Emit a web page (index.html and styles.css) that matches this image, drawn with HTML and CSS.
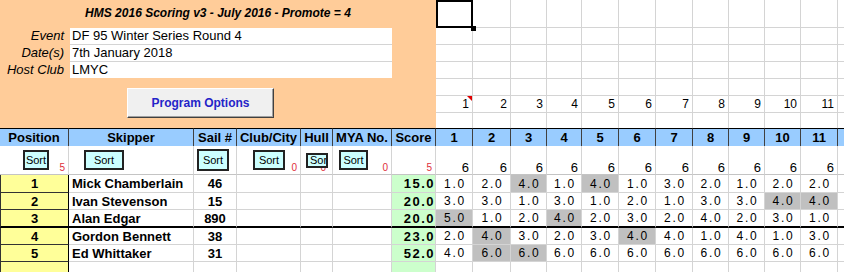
FILE: index.html
```html
<!DOCTYPE html>
<html lang="en">
<head>
    <meta charset="UTF-8">
    <title>HMS 2016 Scoring v3</title>
    <link rel="stylesheet" href="styles.css">
</head>
<body>
    <div class="sheet">
        <div class="panel">
            <div class="panel-title">HMS 2016 Scoring v3 - July 2016 - Promote = 4</div>
            <div class="event-info">
                <div class="info-label">Event</div>
                <div class="info-value">DF 95 Winter Series Round 4</div>
                <div class="info-label">Date(s)</div>
                <div class="info-value">7th January 2018</div>
                <div class="info-label">Host Club</div>
                <div class="info-value">LMYC</div>
            </div>
            <button class="options-button">Program Options</button>
        </div>
        <!-- the rest of the grid is filled in by the script below -->
        <div class="cells" id="cells"></div>
    </div>

    <script>
        const raceCount = 11;
        const cutAfter = 3; // heavy line drawn under this many boats

        // fixed columns left of the race results
        const columns = [
            { title: 'Position', sort: 'sort-position', count: 5 },
            { title: 'Skipper', sort: 'sort-skipper' },
            { title: 'Sail #', sort: 'sort-sail' },
            { title: 'Club/City', sort: 'sort-club', count: 0 },
            { title: 'Hull', sort: 'sort-hull', count: 0, countClass: 'count-hull' },
            { title: 'MYA No.', sort: 'sort-mya', count: 0 },
            { title: 'Score', count: 5 }
        ];

        // dropped = race indexes shown shaded
        const entries = [
            { name: 'Mick Chamberlain', sail: '46', score: 15, results: [1, 2, 4, 1, 4, 1, 3, 2, 1, 2, 2], dropped: [2, 4] },
            { name: 'Ivan Stevenson', sail: '15', score: 20, results: [3, 3, 1, 3, 1, 2, 1, 3, 3, 4, 4], dropped: [9, 10] },
            { name: 'Alan Edgar', sail: '890', score: 20, results: [5, 1, 2, 4, 2, 3, 2, 4, 2, 3, 1], dropped: [0, 3] },
            { name: 'Gordon Bennett', sail: '38', score: 23, results: [2, 4, 3, 2, 3, 4, 4, 1, 4, 1, 3], dropped: [1, 5] },
            { name: 'Ed Whittaker', sail: '31', score: 52, results: [4, 6, 6, 6, 6, 6, 6, 6, 6, 6, 6], dropped: [1, 2] }
        ];

        const cells = document.getElementById('cells');

        function addCell(className, text) {
            const cell = document.createElement('div');
            cell.className = 'cell ' + className;
            if (text !== undefined) cell.textContent = text;
            cells.appendChild(cell);
            return cell;
        }

        // blank cells right of the panel, race numbers in the 6th row
        for (let row = 0; row < 7; row++) {
            for (let col = 0; col <= raceCount; col++) {
                let className = 'blank';
                let text;
                if (row === 0 && col === 0) className += ' selected';
                if (row === 5 && col < raceCount) {
                    className += ' race-number';
                    text = col + 1;
                }
                if (row === 5 && col === 0) className += ' has-comment';
                if (row === 6) className += ' no-line';
                addCell(className, text);
            }
        }

        // header row
        columns.forEach(col => addCell('head', col.title));
        for (let i = 1; i <= raceCount; i++) addCell('head', i);
        addCell('head spare');

        // sort buttons and counters
        columns.forEach(col => {
            const cell = addCell('sort-cell');
            if (col.count !== undefined) {
                const count = document.createElement('span');
                count.className = 'sort-count' + (col.countClass ? ' ' + col.countClass : '');
                count.textContent = col.count;
                cell.appendChild(count);
            }
            if (col.sort) {
                const button = document.createElement('button');
                button.className = 'sort-button ' + col.sort;
                button.textContent = 'Sort';
                cell.appendChild(button);
            }
        });
        for (let i = 0; i < raceCount; i++) addCell('sort-cell race-total', 6);
        addCell('sort-cell');

        // results
        entries.forEach((entry, i) => {
            const line = i === cutAfter - 1 ? ' cut' : '';
            addCell('data position' + line, i + 1);
            addCell('data skipper' + line, entry.name);
            addCell('data sail' + line, entry.sail);
            addCell('data' + line);
            addCell('data' + line);
            addCell('data' + line);
            addCell('data score' + line, entry.score.toFixed(1));
            entry.results.forEach((result, race) => {
                const dropped = entry.dropped.includes(race) ? ' dropped' : '';
                addCell('data result' + dropped + line, result.toFixed(1));
            });
            addCell('data' + line);
        });

        // empty row under the last boat
        addCell('data position');
        for (let i = 0; i < 5; i++) addCell('data');
        addCell('data score');
        for (let i = 0; i <= raceCount; i++) addCell('data');
    </script>
</body>
</html>
```

FILE: styles.css
```css
html,
body {
    margin: 0;
    height: 100%;
    overflow: hidden;
    background-color: #fff;
}

body {
    font-family: "Liberation Sans", Arial, sans-serif;
    color: #000;
}

/* 7 fixed columns, 11 races and one spare column cut by the window */
.sheet {
    display: grid;
    grid-template-columns: 69px 125px 43px 64px 32px 59px 44px 37px 38px 36px 35px 37px 37px 37px 36px 36px 36px 37px 40px;
    grid-template-rows: 28px repeat(5, 17px) 15px 18px 29px 18px 17px 18px 17px 17px 18px;
    width: 878px;
}

.cells {
    display: contents;
}

.cell {
    box-sizing: border-box;
    min-width: 0;
    white-space: nowrap;
}

/* orange header panel */
.panel {
    grid-column: 1 / 8;
    grid-row: 1 / 8;
    background-color: #ffcc99;
    display: flex;
    flex-direction: column;
    align-items: flex-start;
}

.panel-title {
    align-self: stretch;
    height: 28px;
    line-height: 27px;
    text-align: center;
    font-size: 12px;
    font-weight: bold;
    font-style: italic;
}

.event-info {
    display: grid;
    grid-template-columns: 70px 322px;
    grid-template-rows: 17px 17px 16px;
    font-size: 13px;
}

.info-label {
    font-style: italic;
    text-align: right;
    padding-right: 6px;
    line-height: 16px;
}

.info-value {
    background-color: #fff;
    padding-left: 2px;
    line-height: 16px;
    border-bottom: 1px solid #d4d4d4;
}

.info-value:last-child {
    border-bottom: none;
}

.options-button {
    margin: 10px 0 0 127px;
    width: 147px;
    height: 30px;
    padding: 0;
    background-color: #f0f0f0;
    border: 1px solid;
    border-color: #fff #404040 #404040 #fff;
    box-shadow: inset -1px -1px 0 #a0a0a0;
    font-family: inherit;
    font-size: 12px;
    font-weight: bold;
    color: #2424c8;
}

/* plain spreadsheet cells */
.blank {
    border-right: 1px solid #d4d4d4;
    border-bottom: 1px solid #d4d4d4;
}

.blank.no-line {
    border-bottom: none;
}

.blank.selected {
    position: relative;
    border: 2px solid #000;
}

.blank.selected::after {
    content: '';
    position: absolute;
    right: -5px;
    bottom: -5px;
    width: 5px;
    height: 5px;
    background-color: #000;
}

.race-number {
    display: flex;
    justify-content: flex-end;
    align-items: flex-end;
    padding: 0 3px 2px 0;
    font-size: 12px;
    line-height: 12px;
}

.has-comment {
    position: relative;
}

.has-comment::after {
    content: '';
    position: absolute;
    top: 0;
    right: 0;
    border-top: 5px solid #e00000;
    border-left: 5px solid transparent;
}

/* column titles */
.head {
    background-color: #99ccff;
    border-top: 1px solid #000;
    border-right: 1px solid #404040;
    font-size: 13px;
    font-weight: bold;
    text-align: center;
    line-height: 17px;
}

.head.spare {
    border-right: none;
}

/* sort row */
.sort-cell {
    display: grid;
    border-right: 1px solid #d4d4d4;
    border-bottom: 1px solid #c4c4c4;
}

.sort-cell > * {
    grid-area: 1 / 1;
}

.sort-button {
    justify-self: start;
    align-self: center;
    height: 20px;
    padding: 0;
    background-color: #ccffff;
    border: 2px solid #222;
    font-family: inherit;
    font-size: 11px;
    line-height: 14px;
    color: #000;
}

.sort-position { margin-left: 23px; width: 26px; }
.sort-skipper { margin-left: 15px; width: 40px; }
.sort-sail { margin-left: 3px; width: 32px; height: 22px; }
.sort-club { margin-left: 16px; width: 32px; }
.sort-mya { margin-left: 6px; width: 29px; }

/* the hull column is too narrow, so its button is squeezed */
.sort-hull {
    margin-left: 5px;
    width: 22px;
    height: 15px;
    padding-left: 2px;
    line-height: 11px;
    text-align: left;
    overflow: hidden;
    white-space: nowrap;
}

.sort-count {
    justify-self: end;
    align-self: end;
    margin: 0 3px 1px 0;
    font-size: 10px;
    line-height: 10px;
    color: #e0303a;
}

.sort-count.count-hull {
    margin-right: 6px;
}

.race-total {
    display: flex;
    justify-content: flex-end;
    align-items: flex-end;
    padding-right: 3px;
    font-size: 13px;
    line-height: 13px;
}

/* result rows */
.data {
    display: flex;
    align-items: center;
    overflow: hidden;
    border-right: 1px solid #d4d4d4;
    border-bottom: 1px solid #d4d4d4;
}

.data.position {
    justify-content: center;
    background-color: #ffff99;
    border-left: 1px solid #333;
    border-right-color: #000;
    border-bottom-color: #333;
    font-size: 13px;
    font-weight: bold;
}

.data.skipper {
    padding-left: 3px;
    font-size: 13px;
    font-weight: bold;
}

.data.sail {
    justify-content: center;
    font-size: 13px;
    font-weight: bold;
}

.data.score {
    justify-content: flex-end;
    background-color: #ccffcc;
    font-size: 13px;
    font-weight: bold;
    letter-spacing: 1.5px;
}

.data.result {
    justify-content: center;
    padding-left: 2px;
    font-size: 12px;
    letter-spacing: 1.8px;
}

.data.dropped {
    background-color: #c0c0c0;
}

.data.cut {
    border-bottom: 2px solid #000;
}
```
